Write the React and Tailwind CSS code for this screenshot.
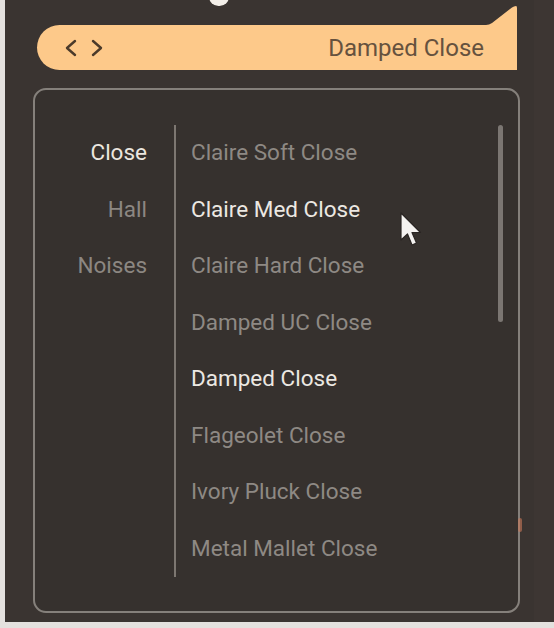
import React from "react";

const categories = [
    { name: "Close", active: true },
    { name: "Hall", active: false },
    { name: "Noises", active: false },
];

const presets = [
    { name: "Claire Soft Close", bright: false },
    { name: "Claire Med Close", bright: true },
    { name: "Claire Hard Close", bright: false },
    { name: "Damped UC Close", bright: false },
    { name: "Damped Close", bright: true },
    { name: "Flageolet Close", bright: false },
    { name: "Ivory Pluck Close", bright: false },
    { name: "Metal Mallet Close", bright: false },
];

function Cursor() {
    return (
        <svg width="24" height="38" viewBox="0 0 24 38" className="absolute left-[394px] top-[211px]">
            <path
                d="M2 2 L2 29 L8.5 23 L13 34 L17.5 32 L13 21.5 L21.5 21.5 Z"
                fill="#f4f2f0"
                stroke="#2a2523"
                strokeWidth="1.2"
                strokeLinejoin="round"
            />
        </svg>
    );
}

export default function App() {
    return (
        <div
            className="relative w-[554px] h-[628px] overflow-hidden bg-[#3a3431] border-l-[5px] border-b-[6px] border-[#e4e1de] text-[22.5px]"
            style={{ fontFamily: "Roboto, 'Liberation Sans', sans-serif" }}
        >
            {/* knob peeking at top */}
            <div className="absolute left-[204px] top-[-13px] w-[20px] h-[19px] rounded-full bg-[#f3efe9]" />
            {/* right strip */}
            <div className="absolute right-0 top-0 w-[20px] h-full bg-[#3d3633]" />
            {/* little orange glint */}
            <div className="absolute left-[513px] top-[518px] w-[4px] h-[14px] rounded-full bg-[#c9795a] opacity-60" />

            <div className="flex flex-col pt-[25px] pl-[32px]">
                {/* preset header tab */}
                <div className="relative w-[480px] h-[45px] bg-[#fdc98a] rounded-l-full rounded-br-[11px] flex items-center pl-[27px] pr-[33px]">
                    <svg
                        width="31"
                        height="20"
                        viewBox="0 0 31 20"
                        className="absolute right-0 top-[-19px]"
                    >
                        <path d="M0 20 L0 19 Q 3 19 6 17 L 26 1.5 Q 28 0 30 0 Q 31 0 31 2 L31 20 Z" fill="#fdc98a" />
                    </svg>
                    <div className="flex items-center gap-[12px] text-[#4b3a2a]">
                        <svg width="14" height="18" viewBox="0 0 14 18" fill="none" stroke="currentColor" strokeWidth="2.4" strokeLinecap="round" strokeLinejoin="round">
                            <path d="M11 2 L3 9 L11 16" />
                        </svg>
                        <svg width="14" height="18" viewBox="0 0 14 18" fill="none" stroke="currentColor" strokeWidth="2.4" strokeLinecap="round" strokeLinejoin="round">
                            <path d="M3 2 L11 9 L3 16" />
                        </svg>
                    </div>
                    <span className="ml-auto text-[24px] text-[#66523e]">Damped Close</span>
                </div>

                {/* browser panel */}
                <div className="mt-[18px] ml-[-4px] w-[487px] h-[525px] rounded-[13px] border-2 border-[#85807b] bg-[#36312e] flex pt-[35px]">
                    <div className="w-[112px] flex flex-col items-end">
                        {categories.map((c) => (
                            <div
                                key={c.name}
                                className={`h-[56.5px] flex items-center ${c.active ? "text-[#ebe6df]" : "text-[#8c8782]"}`}
                            >
                                {c.name}
                            </div>
                        ))}
                    </div>
                    <div className="ml-[27px] w-[2px] h-[452px] bg-[#7d7771]" />
                    <div className="flex-1 flex flex-col pl-[15px]">
                        {presets.map((p) => (
                            <div
                                key={p.name}
                                className={`h-[56.5px] flex items-center ${p.bright ? "text-[#ece8e2]" : "text-[#8e8984]"}`}
                            >
                                {p.name}
                            </div>
                        ))}
                    </div>
                    <div className="w-[5px] h-[197px] mr-[15px] rounded-full bg-[#7b7672]" />
                </div>
            </div>

            <Cursor />
        </div>
    );
}
